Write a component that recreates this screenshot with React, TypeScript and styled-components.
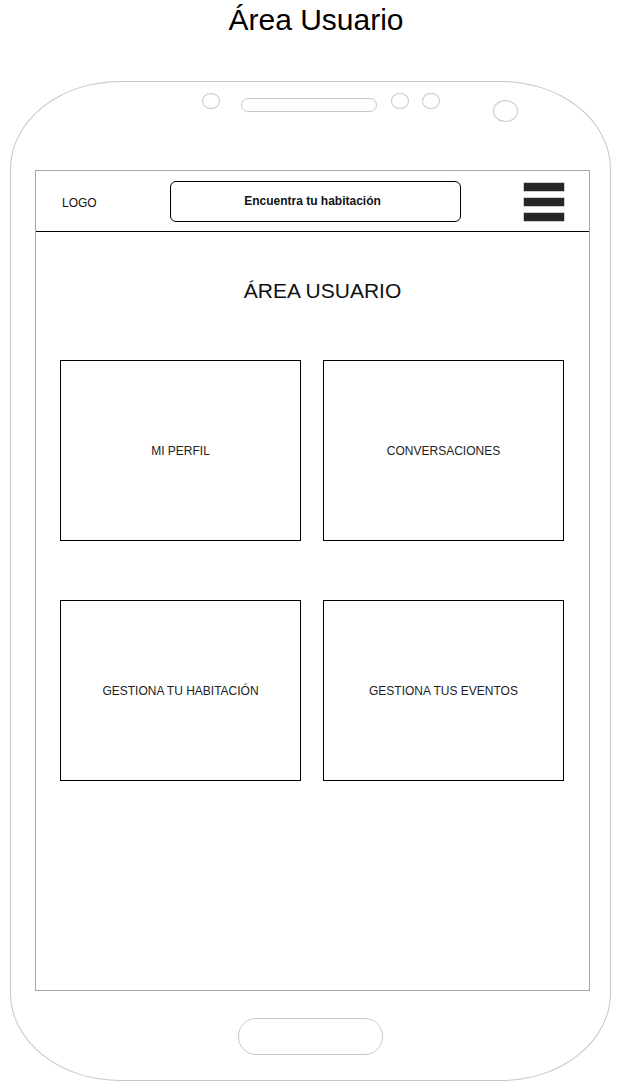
import React from "react";
import styled, { createGlobalStyle } from "styled-components";

const GlobalStyle = createGlobalStyle`
  body {
    margin: 0;
    background: #ffffff;
    font-family: "Liberation Sans", Arial, sans-serif;
  }
`;

const tiles = ["MI PERFIL", "CONVERSACIONES", "GESTIONA TU HABITACIÓN", "GESTIONA TUS EVENTOS"];

export default function App() {
  return (
    <Page>
      <GlobalStyle />
      <PageTitle>Área Usuario</PageTitle>
      <Phone>
        <TopBezel>
          <Sensor />
          <Speaker />
          <Sensor $gap={14} />
          <Sensor $gap={13} />
          <Camera />
        </TopBezel>
        <Screen>
          <Header>
            <Logo>LOGO</Logo>
            <SearchBox>Encuentra tu habitación</SearchBox>
            <Burger>
              <Bar />
              <Bar />
              <Bar />
            </Burger>
          </Header>
          <Heading>ÁREA USUARIO</Heading>
          <TileGrid>
            {tiles.map((t) => (
              <Tile key={t}>{t}</Tile>
            ))}
          </TileGrid>
        </Screen>
        <HomeButton />
      </Phone>
    </Page>
  );
}

const Page = styled.div`
  width: 632px;
  height: 1082px;
  overflow: hidden;
`;

const PageTitle = styled.div`
  height: 81px;
  box-sizing: border-box;
  padding-top: 3px;
  text-align: center;
  font-size: 30px;
  line-height: 34px;
  color: #000;
`;

const Phone = styled.div`
  margin-left: 10px;
  width: 601px;
  height: 1000px;
  box-sizing: border-box;
  border: 1px solid #c8c8c8;
  border-radius: 110px / 88px;
  display: flex;
  flex-direction: column;
`;

const TopBezel = styled.div`
  height: 88px;
  box-sizing: border-box;
  padding: 11px 0 0 191px;
  display: flex;
  align-items: flex-start;
`;

const Sensor = styled.div<{ $gap?: number }>`
  width: 18px;
  height: 16px;
  box-sizing: border-box;
  margin-left: ${(p) => p.$gap ?? 0}px;
  border: 1px solid #c8c8c8;
  border-radius: 50%;
`;

const Speaker = styled.div`
  width: 136px;
  height: 14px;
  box-sizing: border-box;
  margin: 5px 0 0 21px;
  border: 1px solid #c8c8c8;
  border-radius: 7px;
`;

const Camera = styled.div`
  width: 25px;
  height: 22px;
  box-sizing: border-box;
  margin: 7px 0 0 53px;
  border: 1px solid #c8c8c8;
  border-radius: 50%;
`;

const Screen = styled.div`
  margin-left: 24px;
  width: 555px;
  height: 821px;
  box-sizing: border-box;
  border: 1px solid #a6a6a6;
  display: flex;
  flex-direction: column;
`;

const Header = styled.div`
  height: 60px;
  border-bottom: 1px solid #000;
  display: flex;
  align-items: center;
`;

const Logo = styled.div`
  width: 134px;
  box-sizing: border-box;
  padding: 3px 0 0 26px;
  font-size: 12px;
  color: #111;
`;

const SearchBox = styled.div`
  width: 291px;
  height: 41px;
  box-sizing: border-box;
  border: 1px solid #000;
  border-radius: 6px;
  display: flex;
  align-items: center;
  justify-content: center;
  padding: 0 6px 1px 0;
  font-size: 12px;
  font-weight: bold;
  color: #111;
`;

const Burger = styled.div`
  margin: 2px 0 0 63px;
  width: 40px;
  display: flex;
  flex-direction: column;
  gap: 7px;
`;

const Bar = styled.div`
  height: 8px;
  background: #262626;
  box-shadow: 0 0 0 0.5px #9a9a9a;
`;

const Heading = styled.div`
  margin-top: 47px;
  padding-left: 20px;
  text-align: center;
  font-size: 21px;
  line-height: 24px;
  color: #111;
`;

const TileGrid = styled.div`
  margin: 57px 0 0 24px;
  display: grid;
  grid-template-columns: 241px 241px;
  grid-auto-rows: 181px;
  column-gap: 22px;
  row-gap: 59px;
`;

const Tile = styled.div`
  box-sizing: border-box;
  border: 1px solid #000;
  display: flex;
  align-items: center;
  justify-content: center;
  font-size: 12px;
  color: #222;
`;

const HomeButton = styled.div`
  margin: 27px 0 0 227px;
  width: 145px;
  height: 37px;
  box-sizing: border-box;
  border: 1px solid #c8c8c8;
  border-radius: 18px;
`;
